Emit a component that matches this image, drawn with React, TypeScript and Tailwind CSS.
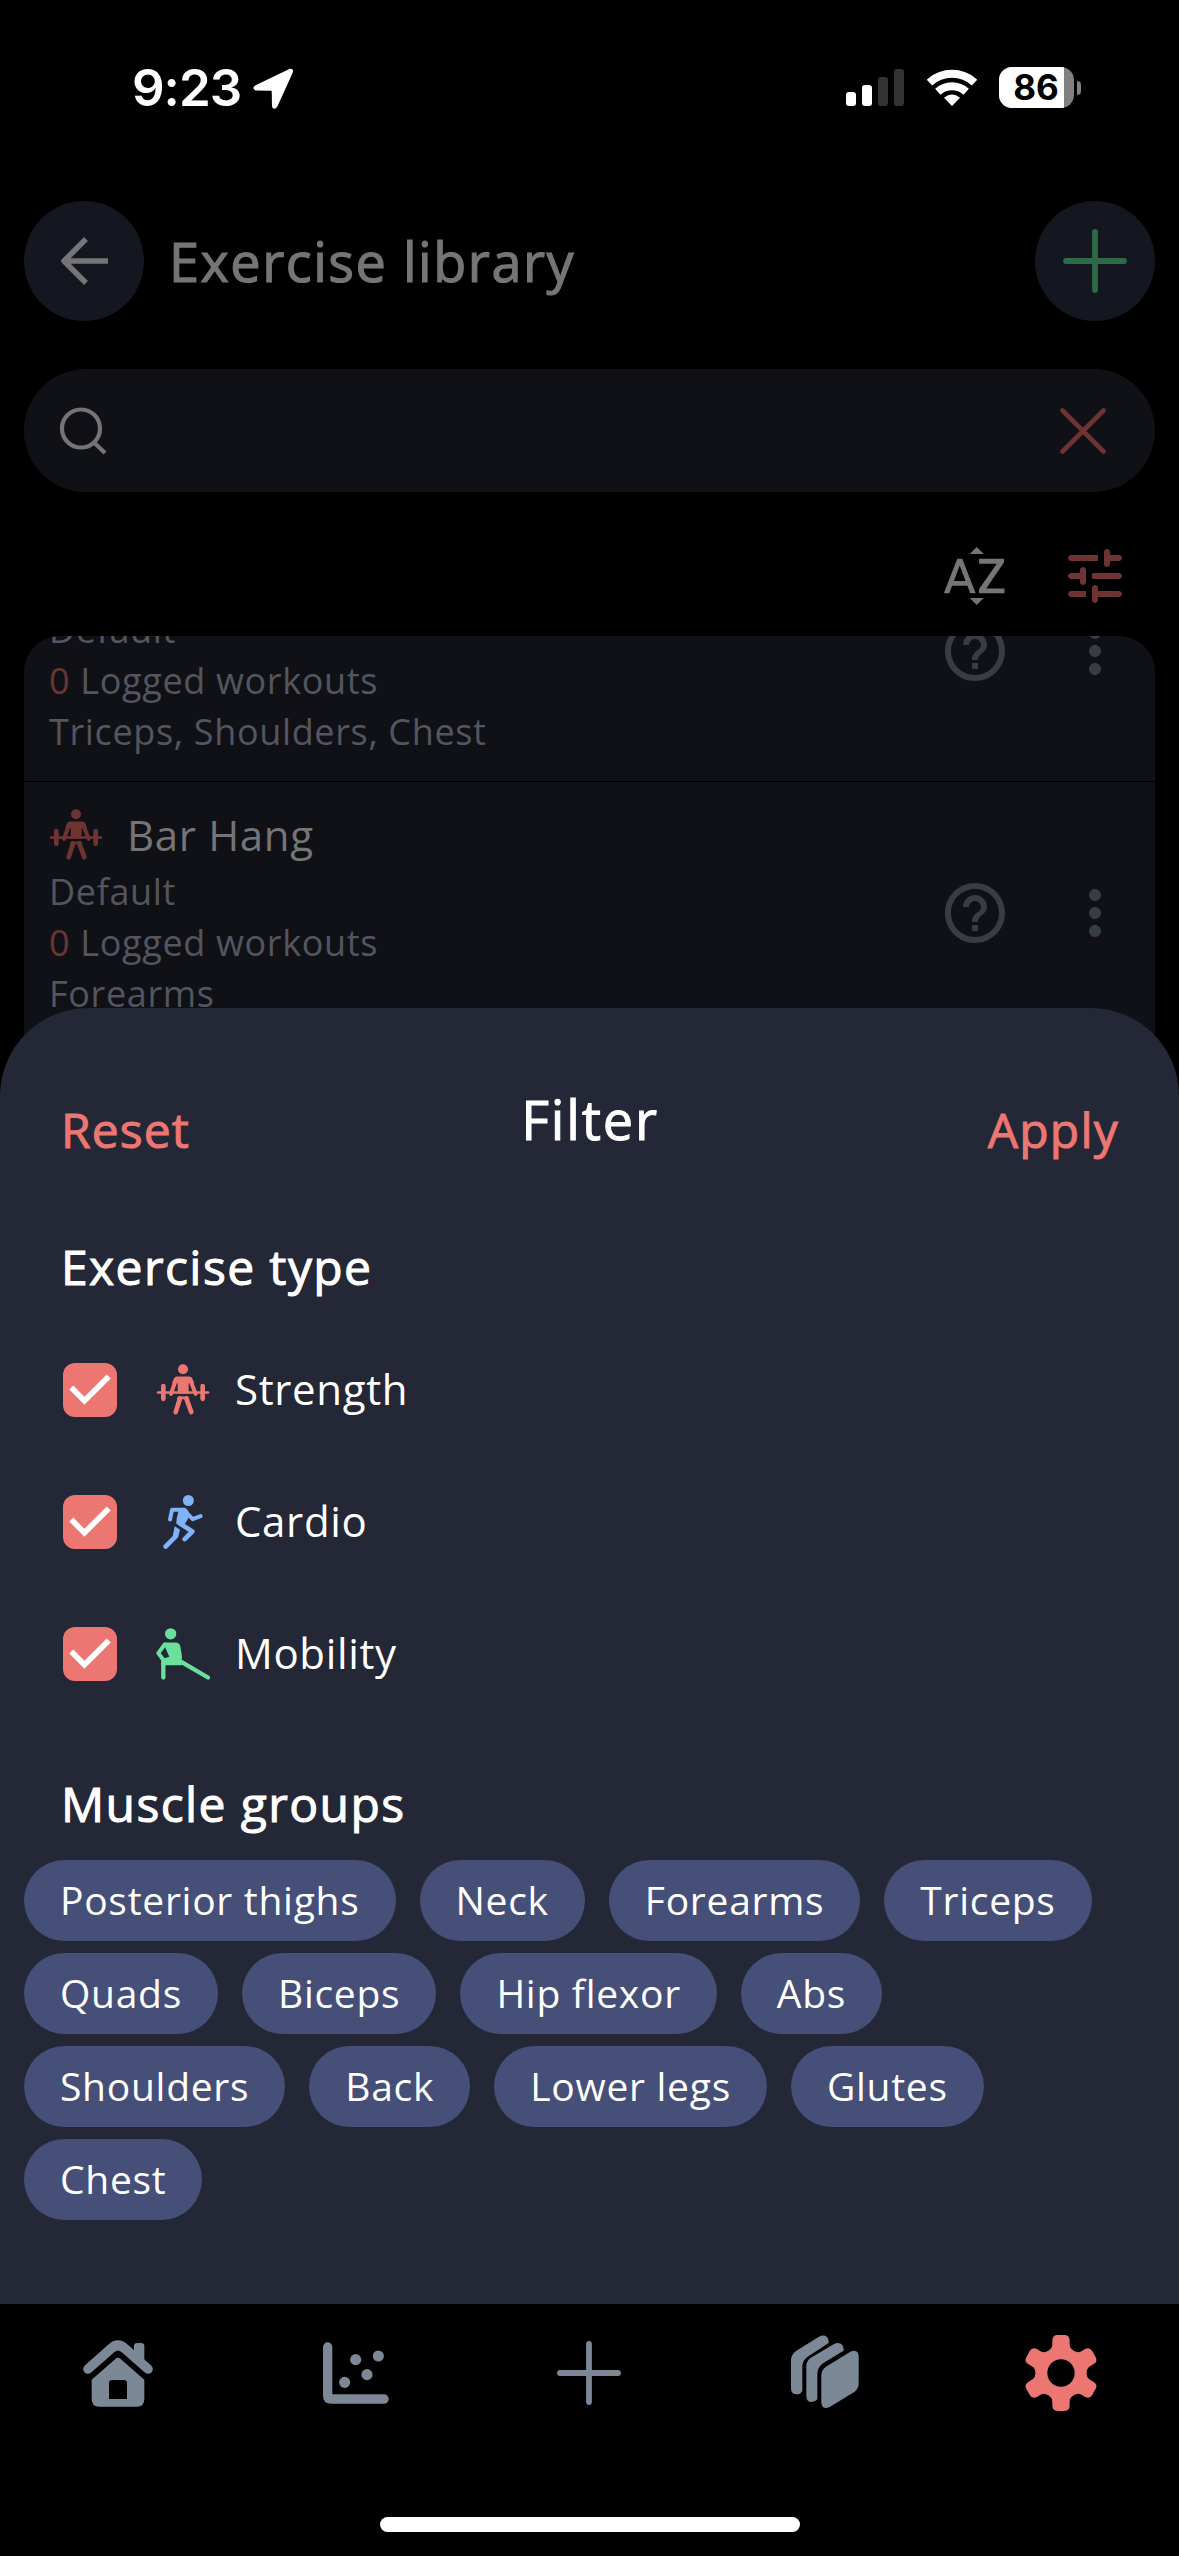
import React from "react";
import { MdSortByAlpha, MdHelpOutline, MdMoreVert } from "react-icons/md";

const muscleGroups = [
  "Posterior thighs",
  "Neck",
  "Forearms",
  "Triceps",
  "Quads",
  "Biceps",
  "Hip flexor",
  "Abs",
  "Shoulders",
  "Back",
  "Lower legs",
  "Glutes",
  "Chest",
];

function StrengthIcon() {
  return (
    <svg viewBox="468 67.5 162 162" className="size-[54px] shrink-0" fill="currentColor" stroke="currentColor" strokeLinecap="round">
      <circle cx="549" cy="86" r="15" stroke="none" />
      <path d="M530 108H568Q574 108 577 114L583 128H566V160H533V128H516L522 114Q525 108 530 108Z" stroke="none" />
      <path d="M528 117L513 160M570 117L587 160" strokeWidth="12" fill="none" />
      <path d="M474 156H624" strokeWidth="8" />
      <rect x="483" y="130" width="14" height="52" rx="7" stroke="none" />
      <rect x="601" y="130" width="14" height="52" rx="7" stroke="none" />
      <path d="M534 168H565L568 176H530Z" stroke="none" />
      <path d="M540 174L527 215M559 174L574 215" strokeWidth="14" />
    </svg>
  );
}

function CardioIcon() {
  return (
    <svg viewBox="468 463.5 162 162" className="size-[54px] shrink-0" fill="none" stroke="currentColor" strokeLinecap="round" strokeLinejoin="round">
      <circle cx="565" cy="480" r="16.5" fill="currentColor" stroke="none" />
      <path d="M510 537L516 508H552" strokeWidth="12" />
      <path d="M534 508L554 502Q562 505 566 514L568 528L556 548L545 556L529 548L530 535L535 514Z" fill="currentColor" stroke="none" />
      <path d="M562 519L578 536L602 527" strokeWidth="12" />
      <path d="M537 547L577 573L554 596" strokeWidth="14" />
      <path d="M524 557L540 568L534 591L526 594L518 588Z" fill="currentColor" stroke="none" />
      <path d="M525 590L497 618" strokeWidth="14" />
    </svg>
  );
}

function MobilityIcon() {
  return (
    <svg viewBox="468 859.5 162 162" className="size-[54px] shrink-0" fill="none" stroke="currentColor" strokeLinecap="round" strokeLinejoin="round">
      <circle cx="512" cy="880" r="17" fill="currentColor" stroke="none" />
      <path d="M494 912L475 938L489 957" strokeWidth="12" />
      <path d="M492 906H526Q539 906 541 918L546 948L545 958L556 966L545 974H484V962L488 955L508 949L497 925Z" fill="currentColor" stroke="none" />
      <path d="M490 966V1011M544 964L624 1011" strokeWidth="13" />
    </svg>
  );
}

function TuneIcon() {
  return (
    <svg viewBox="0 0 24 24" className="size-[72px] text-[#6d3433]" fill="currentColor">
      <path d="M3 18c0 .55.45 1 1 1h5v-2H4c-.55 0-1 .45-1 1zM3 6c0 .55.45 1 1 1h9V5H4c-.55 0-1 .45-1 1zm10 14v-1h7c.55 0 1-.45 1-1s-.45-1-1-1h-7v-1c0-.55-.45-1-1-1s-1 .45-1 1v4c0 .55.45 1 1 1s1-.45 1-1zM7 10v1H4c-.55 0-1 .45-1 1s.45 1 1 1h3v1c0 .55.45 1 1 1s1-.45 1-1v-4c0-.55-.45-1-1-1s-1 .45-1 1zm14 2c0-.55-.45-1-1-1h-9v2h9c.55 0 1-.45 1-1zm-5-3c.55 0 1-.45 1-1V7h3c.55 0 1-.45 1-1s-.45-1-1-1h-3V4c0-.55-.45-1-1-1s-1 .45-1 1v4c0 .55.45 1 1 1z" />
    </svg>
  );
}

function StatusBar() {
  return (
    <div className="flex h-[201px] items-start justify-between pt-[58px] pr-[98px] pl-[132px]">
      <div className="flex h-[60px] items-center">
        <span className="font-['Inter',sans-serif] text-[51px] leading-[60px] font-semibold tracking-[-1px] text-white">9:23</span>
        <svg viewBox="0 0 40 40" className="ml-[12px] size-[41px]" fill="#fff">
          <path d="M35 1.2L3 16.5C-1 18.5 0 22 4 22L17 22.2C18 22.2 18.3 22.5 18.3 23.5L18.5 36C18.5 40.5 22 41 24 37L38.5 5C40 1.5 38 -.2 35 1.2Z" />
        </svg>
      </div>
      <div className="flex h-[59px] items-center">
        <svg viewBox="0 0 58 37" className="h-[37px] w-[58px]">
          <rect x="0" y="23" width="10" height="14" rx="3" fill="#fff" />
          <rect x="16" y="16" width="10" height="21" rx="3" fill="#fff" />
          <rect x="32" y="8" width="10" height="29" rx="3" fill="#333" />
          <rect x="48" y="0" width="10" height="37" rx="3" fill="#333" />
        </svg>
        <svg viewBox="0 0 50 37" className="ml-[23px] h-[37px] w-[50px]">
          <path d="M2.4 13.6A33.5 33.5 0 0 1 47.6 13.6M10.8 22.8A21 21 0 0 1 39.2 22.8" fill="none" stroke="#fff" strokeWidth="8" />
          <path d="M25 37L17 28.7Q25 22.5 33 28.7Z" fill="#fff" />
        </svg>
        <div className="ml-[22px] flex h-[41px] w-[75px] overflow-hidden rounded-[13px] bg-[#808080]">
          <div className="flex w-[65px] items-center justify-center bg-white pl-[9px] font-['Inter',sans-serif] text-[35px] leading-[41px] font-bold text-black">86</div>
        </div>
        <div className="ml-[3px] h-[14px] w-[4px] rounded-r-full bg-[#808080]" />
      </div>
    </div>
  );
}

function LibraryHeader() {
  return (
    <div className="flex h-[120px] items-center px-6">
      <div className="flex size-[120px] items-center justify-center rounded-full bg-[#141620]">
        <svg viewBox="0 0 48 48" className="size-[48px]" fill="none" stroke="#757575" strokeWidth="5.6" strokeLinejoin="round">
          <path d="M26 2L4 24L26 46M4 24H48" />
        </svg>
      </div>
      <h1 className="ml-[25px] flex-1 text-[54px] leading-[72px] tracking-[1.52px] text-[#757575] [-webkit-text-stroke:1.2px_#757575]">Exercise library</h1>
      <div className="flex size-[120px] items-center justify-center rounded-full bg-[#141620]">
        <svg viewBox="0 0 64 64" className="size-[64px]" fill="none" stroke="#2d6a47" strokeWidth="5.8" strokeLinecap="round">
          <path d="M32 3V61M3 32H61" />
        </svg>
      </div>
    </div>
  );
}

function ExerciseRow({ name, muscles }: { name?: string; muscles: string }) {
  return (
    <div className="flex h-[262px] items-center gap-12 border-b border-black px-6">
      <div className="flex-1 pl-px text-[36px] leading-[51px] tracking-[0.65px] text-[#53555f]">
        <div className="mb-[3px] flex h-[57px] items-center gap-6 text-[#6d3433]">
          <StrengthIcon />
          <span className="text-[42px] leading-[57px] text-[#757575]">{name}</span>
        </div>
        <p>Default</p>
        <p>
          <span className="text-[#6d3433]">0</span> Logged workouts
        </p>
        <p>{muscles}</p>
      </div>
      <MdHelpOutline className="size-[72px] text-[#363d45]" />
      <MdMoreVert className="size-[72px] text-[#363d45]" />
    </div>
  );
}

function TypeRow({ label, children }: { label: string; children: React.ReactNode }) {
  return (
    <div className="flex h-[132px] items-center px-[63px]">
      <div className="size-[54px] rounded-[12px] bg-[#ec7672]">
        <svg viewBox="0 0 54 54" className="size-[54px]" fill="none" stroke="#fff" strokeWidth="5.6">
          <path d="M8.3 24.6L21.4 37.7L45.7 13.5" />
        </svg>
      </div>
      <div className="ml-[39px]">{children}</div>
      <span className="ml-[25px] pb-[2px] text-[42px] leading-[60px] tracking-[0.65px] text-white">{label}</span>
    </div>
  );
}

function FilterSheet() {
  return (
    <section className="absolute inset-x-0 top-[1008px] h-[1296px] rounded-t-[88px] bg-[#242735] pt-[75px]">
      <div className="grid h-[152px] grid-cols-3 items-start pr-[60px] pl-[61px]">
        <button className="mt-[15px] text-left text-[48px] leading-[64px] tracking-[1.1px] text-[#ec7672] [-webkit-text-stroke:1px_#ec7672]">Reset</button>
        <h2 className="text-center text-[54px] leading-[72px] tracking-[1.8px] text-white [-webkit-text-stroke:1px_#fff]">Filter</h2>
        <button className="mt-[15px] text-right text-[48px] leading-[64px] tracking-[1.2px] text-[#ec7672] [-webkit-text-stroke:1px_#ec7672]">Apply</button>
      </div>
      <h3 className="px-[61px] text-[48px] leading-[64px] tracking-[1.4px] text-white [-webkit-text-stroke:1px_#fff]">Exercise type</h3>
      <div className="mt-[25px]">
        <TypeRow label="Strength">
          <div className="text-[#ec7672]"><StrengthIcon /></div>
        </TypeRow>
        <TypeRow label="Cardio">
          <div className="text-[#7fb3f8]"><CardioIcon /></div>
        </TypeRow>
        <TypeRow label="Mobility">
          <div className="text-[#6ae09c]"><MobilityIcon /></div>
        </TypeRow>
      </div>
      <h3 className="mt-[52px] px-[61px] text-[48px] leading-[64px] tracking-[1.4px] text-white [-webkit-text-stroke:1px_#fff]">Muscle groups</h3>
      <div className="mt-[24px] flex flex-wrap gap-x-6 gap-y-3 px-6">
        {muscleGroups.map((group) => (
          <span key={group} className="h-[81px] rounded-full bg-[#454f78] px-9 text-[39px] leading-[79px] tracking-[0.72px] text-white">
            {group}
          </span>
        ))}
      </div>
    </section>
  );
}

function HomeIcon() {
  return (
    <svg viewBox="21 36 216 216" className="size-[72px]" fill="currentColor">
      <path d="M39 132L109 70Q129 52 149 70L219 132" fill="none" stroke="currentColor" strokeWidth="29" strokeLinecap="round" />
      <path d="M177 64Q177 54 187 54H198Q208 54 208 64V118L177 92Z" />
      <path fillRule="evenodd" d="M50 164L121 102Q129 95 137 102L208 164V222Q208 245 186 245H72Q50 245 50 222ZM102 222H156V174Q156 165 147 165H111Q102 165 102 174Z" />
    </svg>
  );
}

function ChartIcon() {
  return (
    <svg viewBox="728 36 216 216" className="size-[72px]" fill="currentColor">
      <path d="M743 66a14 14 0 0 1 28 0V208H926a14 14 0 0 1 0 28.5H767Q743 236 743 212Z" />
      <circle cx="841" cy="104" r="16.7" />
      <circle cx="909" cy="93" r="16.7" />
      <circle cx="875" cy="149" r="16.7" />
      <circle cx="808" cy="172" r="16.7" />
    </svg>
  );
}

function LayersIcon() {
  return (
    <svg viewBox="28 36 216 216" className="size-[72px] overflow-visible" fill="currentColor">
      <path d="M147 54C148 34 134 27 118 35L50 77Q34 88 34 106V190Q34 208 51 208Q64 208 68 197V122Q70 105 84 95Z" />
      <path d="M192 77C193 58 180 49 163 57L96 97Q80 107 80 124V212Q80 231 96 231Q107 231 113 223V145Q114 127 130 115Z" />
      <path d="M125 152Q125 135 139 125L212 80Q237 70 237 96V175Q237 192 224 201L150 246Q125 256 125 230Z" />
    </svg>
  );
}

function GearIcon() {
  return (
    <svg viewBox="-120 -120 240 240" className="size-[80px]" fill="#ec7672">
      {[0, 60, 120, 180, 240, 300].map((angle) => (
        <path
          key={angle}
          transform={`rotate(${angle})`}
          d="M-38.5 -66.7C-31 -71 -26 -76 -26 -86V-97Q-26 -114 -10 -114H10Q26 -114 26 -97V-86C26 -76 31 -71 38.5 -66.7L0 0Z"
        />
      ))}
      <circle r="58" fill="none" stroke="#ec7672" strokeWidth="34" />
      <circle r="41" fill="#000" />
    </svg>
  );
}

function TabBar() {
  return (
    <nav className="absolute inset-x-0 bottom-0 h-[252px] bg-black">
      <div className="grid h-[138px] grid-cols-5 place-items-center text-[#7c8896]">
        <HomeIcon />
        <ChartIcon />
        <svg viewBox="0 0 64 64" className="size-[64px]" fill="none" stroke="currentColor" strokeWidth="5.8" strokeLinecap="round">
          <path d="M32 3V61M3 32H61" />
        </svg>
        <LayersIcon />
        <GearIcon />
      </div>
      <div className="mx-auto mt-[75px] h-[15px] w-[420px] rounded-full bg-white" />
    </nav>
  );
}

export default function App() {
  return (
    <main className="relative h-[2556px] w-[1179px] overflow-hidden bg-black font-['Open_Sans',sans-serif]">
      <StatusBar />
      <LibraryHeader />
      <div className="mx-6 mt-12 flex h-[123px] items-center justify-between rounded-full bg-[#101116] pr-[49px] pl-9">
        <svg viewBox="0 0 48 48" className="size-[48px]" fill="none" stroke="#757575" strokeWidth="4.2">
          <circle cx="21" cy="21.5" r="19" />
          <path d="M34 35.5L45 46" />
        </svg>
        <svg viewBox="0 0 46 46" className="size-[46px]" fill="none" stroke="#6d3433" strokeWidth="4.6" strokeLinecap="round">
          <path d="M2.5 2.5L43.5 43.5M43.5 2.5L2.5 43.5" />
        </svg>
      </div>
      <div className="mt-12 flex h-[96px] items-start justify-end gap-12 pr-12">
        <MdSortByAlpha className="size-[72px] text-[#757575]" />
        <TuneIcon />
      </div>
      <div className="mx-6 h-[460px] overflow-hidden rounded-t-[36px] bg-[#101116]">
        <div className="-mt-[116px]">
          <ExerciseRow muscles="Triceps, Shoulders, Chest" />
          <ExerciseRow name="Bar Hang" muscles="Forearms" />
        </div>
      </div>
      <FilterSheet />
      <TabBar />
    </main>
  );
}
